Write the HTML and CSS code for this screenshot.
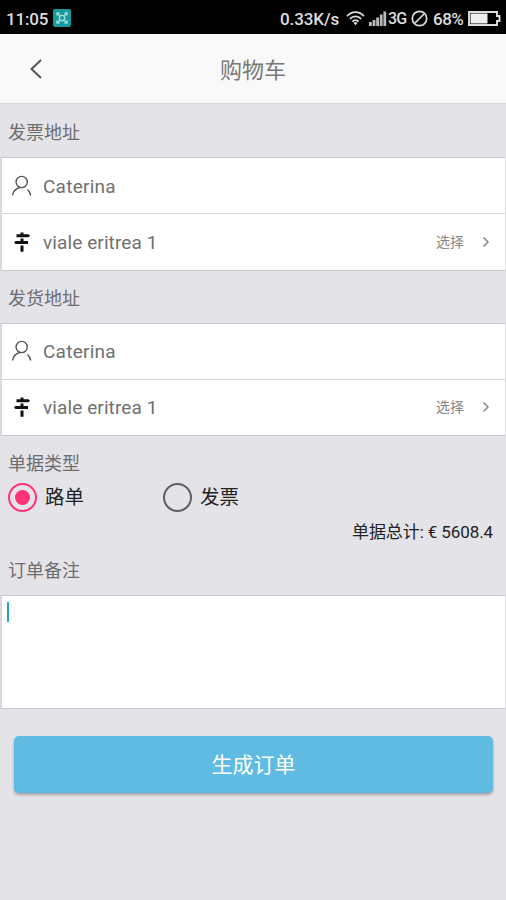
FILE: index.html
```html
<!DOCTYPE html>
<html lang="zh-CN">
<head>
<meta charset="utf-8">
<title>购物车</title>
<link rel="stylesheet" href="styles.css">
</head>
<body>
<svg width="0" height="0" class="symbols" aria-hidden="true">
  <symbol id="person" viewBox="0 0 22 22"><g fill="none" stroke="#555" stroke-width="1.4"><circle cx="10.700" cy="7" r="5.600"/><path d="M9 12.500C5 13.500 2 16.500 1.500 20.500M16.500 14.500c1.700 1.500 2.700 3.300 3.200 6"/></g></symbol>
  <symbol id="sign" viewBox="0 0 22 22"><path d="M9.500 1.500h3V3.300h5L19 4.800l-1.500 1.500H5.500v-3h4zM9.500 7.500h3V10H17v3H4.500L3 11.500 4.500 10h5zM9.500 14.500h3v6.300h-3z" fill="#111"/></symbol>
</svg>
<div class="status">
  <span class="clock">11:05</span>
  <svg class="app" viewBox="0 0 18 18"><rect width="18" height="18" rx="2" fill="#179a9b"/><g fill="none" stroke="#a7dcdc" stroke-width="1.300"><circle cx="9" cy="9" r="2.700"/><path d="M4 6.500V4h2.500M11.500 4H14v2.500M14 11.500V14h-2.500M6.500 14H4v-2.500M4 4l3 3M14 4l-3 3M4 14l3-3M14 14l-3-3"/></g></svg>
  <span class="speed">0.33K/s</span>
  <svg class="wifi" viewBox="0 0 20 16"><g fill="none" stroke="#ddd" stroke-width="1.900"><path d="M1 5.500C6-.2 14-.2 19 5.500M4 8.500c3.500-3.800 8.500-3.800 12 0M6.700 11.300c2-2 4.600-2 6.600 0"/></g><path d="M7.700 12.500q2.300-1.700 4.600 0L10 15.200z" fill="#ddd"/></svg>
  <svg class="signal" viewBox="0 0 18 16"><path d="M0 11h2.800v4H0zM3.600 9h2.800v6H3.600zM7.200 6.500H10V15H7.200zM10.800 3.500h2.800V15h-2.800zM14.400 .5h2.800V15h-2.800z" fill="#bbb"/></svg>
  <span class="net">3G</span>
  <svg class="blocked" viewBox="0 0 17 17"><g fill="none" stroke="#ddd" stroke-width="1.700"><circle cx="8.500" cy="8.500" r="7.200"/><path d="M4 13l9-9"/></g></svg>
  <span class="percent">68%</span>
  <svg class="battery" viewBox="0 0 33 15"><path d="M1 1h28v4h2.500v5H29v4H1z" fill="none" stroke="#ddd" stroke-width="1.900"/><path d="M2.500 2.500h17v10h-17z" fill="#eee"/></svg>
</div>
<header class="header">
  <svg class="back" viewBox="0 0 14 22"><path d="M12 2L2.500 11 12 20" fill="none" stroke="#555" stroke-width="2"/></svg>
  <h1>购物车</h1>
</header>
<main>
  <h2 class="label first">发票地址</h2>
  <section class="card">
    <div class="row"><svg class="icon"><use href="#person"/></svg><span class="value">Caterina</span></div>
    <div class="row"><svg class="icon"><use href="#sign"/></svg><span class="value address">viale eritrea 1</span><span class="choose">选择</span><svg class="next" viewBox="0 0 8 12"><path d="M1.500 1.500L6 6l-4.500 4.500" fill="none" stroke="#888" stroke-width="1.500"/></svg></div>
  </section>
  <h2 class="label">发货地址</h2>
  <section class="card">
    <div class="row"><svg class="icon"><use href="#person"/></svg><span class="value">Caterina</span></div>
    <div class="row"><svg class="icon"><use href="#sign"/></svg><span class="value address">viale eritrea 1</span><span class="choose">选择</span><svg class="next" viewBox="0 0 8 12"><path d="M1.500 1.500L6 6l-4.500 4.500" fill="none" stroke="#888" stroke-width="1.500"/></svg></div>
  </section>
  <h2 class="label type">单据类型</h2>
  <div class="options">
    <div class="option"><span class="radio checked"></span>路单</div>
    <div class="option"><span class="radio"></span>发票</div>
  </div>
  <p class="total">单据总计: € 5608.4</p>
  <h2 class="label notes">订单备注</h2>
  <div class="editor"><span class="caret"></span></div>
  <button class="submit">生成订单</button>
</main>
</body>
</html>
```

FILE: styles.css
```css
* { box-sizing: border-box; }
body {
  margin: 0;
  height: 900px;
  overflow: hidden;
  background: #e4e3e8;
  color: #666;
  font-family: Roboto, "Noto Sans CJK SC", sans-serif;
}
.symbols { display: block; }
.status {
  display: flex;
  align-items: center;
  height: 34px;
  padding: 3px 4px 0 6px;
  background: #000;
  color: #ddd;
  font-size: 17px;
  line-height: 30px;
  white-space: nowrap;
}
.status svg { flex: none; }
.clock { width: 47px; font-weight: 500; letter-spacing: -.2px; }
.app { width: 18px; height: 18px; margin-top: -1px; }
.speed { width: 66px; margin-left: 209px; font-weight: 500; letter-spacing: -.1px; }
.wifi { width: 19px; height: 15px; margin-top: -1px; }
.signal { width: 18px; height: 16px; margin-left: 4px; }
.net { width: 22px; margin-left: 1px; font-size: 16px; font-weight: 500; letter-spacing: -.8px; }
.blocked { width: 17px; height: 17px; margin-left: 1px; }
.percent { width: 33px; margin-left: 5px; font-weight: 500; letter-spacing: -.5px; }
.battery { width: 33px; height: 15px; margin-left: 2px; }
.header {
  display: grid;
  grid-template-columns: 60px 1fr 60px;
  align-items: center;
  height: 70px;
  background: #f9f9f9;
  border-bottom: 1px solid #d8d8dc;
}
.back { width: 14px; height: 22px; margin: 1px 0 0 29px; }
h1 { margin: 0; padding-top: 4px; font-size: 22px; line-height: 30px; font-weight: 400; text-align: center; color: #777; }
.label { height: 52px; margin: 0; padding: 0 8px; font-size: 18px; font-weight: 400; line-height: 55px; color: #6e6e70; }
.first { height: 53px; line-height: 57px; }
.card { height: 113.5px; background: #fff; border: 1px solid #c9c9cd; border-left: 2px solid #dadadd; border-right-color: #e0e0e3; }
.row { display: flex; align-items: center; height: 55.400px; padding: 0 15px 0 9px; }
.row + .row { height: 56px; border-top: 1px solid #d5d5d8; }
.icon { width: 22px; height: 22px; flex: none; }
.value { flex: 1; margin-left: 10px; padding-top: 1px; font-size: 19px; letter-spacing: .25px; color: #707070; }
.address { letter-spacing: .1px; }
.choose { font-size: 14px; line-height: 20px; color: #888; }
.next { width: 8px; height: 12px; margin-left: 18px; }
.type { height: 42px; line-height: 56px; }
.options { display: flex; height: 38px; padding: 1px 0 0 8px; }
.option { display: flex; align-items: center; width: 155px; gap: 8px; font-size: 19.500px; line-height: 28px; color: #222; }
.radio { display: grid; place-items: center; width: 29px; height: 29px; border: 2.5px solid #5e5e63; border-radius: 50%; }
.checked { border-color: #ff3376; }
.checked::after { content: ""; width: 15px; height: 15px; border-radius: 50%; background: #ff3376; }
.total { height: 32px; margin: 0; padding-right: 13px; font-size: 17px; letter-spacing: -.1px; line-height: 32px; text-align: right; color: #222; }
.notes { height: 47px; line-height: 46px; }
.editor { height: 113.500px; padding: 6px 5px; background: #fff; border: 1px solid #c9c9cd; border-left: 2px solid #dadadd; border-right-color: #e0e0e3; }
.caret { display: block; width: 2px; height: 20px; background: #2ba0d0; }
.submit {
  display: block;
  width: 479px;
  height: 57px;
  margin: 27.500px 0 0 14px;
  padding: 1px 0 0;
  border: 0;
  border-radius: 5px;
  background: #5fbbe2;
  box-shadow: 0 2px 3px rgba(80, 60, 70, .4);
  color: #fff;
  font: 400 21px/56px Roboto, "Noto Sans CJK SC", sans-serif;
}
```
